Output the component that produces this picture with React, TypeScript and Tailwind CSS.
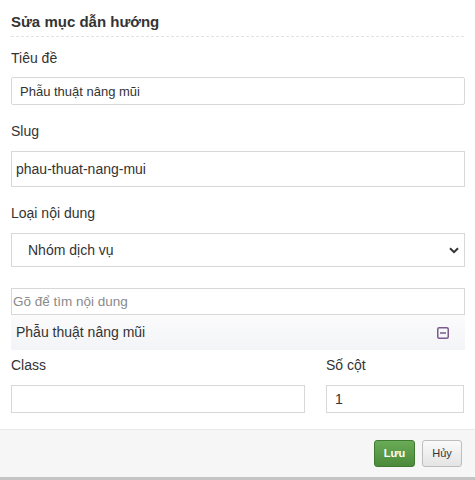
import { useState } from "react";

function Label({ children }: { children: React.ReactNode }) {
  return <label className="block h-5 text-[14px] leading-5 text-[#333]">{children}</label>;
}

export default function App() {
  const [title, setTitle] = useState("Phẫu thuật nâng mũi");
  const [slug, setSlug] = useState("phau-thuat-nang-mui");
  const [cols, setCols] = useState("1");

  return (
    <div
      className="flex h-[480px] w-[475px] flex-col bg-white text-[#333]"
      style={{ fontFamily: '"Liberation Sans", Arial, sans-serif' }}
    >
      <div className="px-[11px] pt-3">
        <h3 className="h-5 text-[15px] font-bold leading-5 text-[#333]">Sửa mục dẫn hướng</h3>
        <div className="mt-1 border-b border-dashed border-[#e3e3e3]" />
      </div>

      <div className="flex-1 px-[11px] pt-[11px]">
        <Label>Tiêu đề</Label>
        <input
          value={title}
          onChange={(e) => setTitle(e.target.value)}
          className="mt-[9px] block h-[28px] w-[454px] rounded-[2px] border border-[#d8d8d8] px-2 text-[13px] text-[#333] outline-none"
        />

        <div className="mt-4">
          <Label>Slug</Label>
        </div>
        <input
          value={slug}
          onChange={(e) => setSlug(e.target.value)}
          className="mt-[10px] block h-[36px] w-[454px] border border-[#d8d8d8] px-1 text-[14px] text-[#333] outline-none"
        />

        <div className="mt-4">
          <Label>Loại nội dung</Label>
        </div>
        <div className="relative mt-[10px] h-[34px] w-[454px]">
          <select className="block h-full w-full appearance-none border border-[#d8d8d8] bg-white pl-[16px] text-[14px] text-[#333] outline-none">
            <option>Nhóm dịch vụ</option>
          </select>
          <svg
            className="pointer-events-none absolute right-[6px] top-[14px]"
            width="10"
            height="7"
            viewBox="0 0 10 7"
            fill="none"
          >
            <path d="M1 1.2 5 5.2 9 1.2" stroke="#333" strokeWidth="2" />
          </svg>
        </div>

        <input
          placeholder="Gõ để tìm nội dung"
          className="mt-[21px] block h-[27px] w-[454px] border border-[#d8d8d8] px-[1px] text-[13.5px] text-[#333] outline-none placeholder:text-[#8a8a8a]"
        />
        <div className="flex h-[35px] w-[454px] items-center justify-between bg-gradient-to-b from-[#fbfbfc] to-[#f3f4f7] pl-[5px] pr-[16px]">
          <span className="text-[14px] text-[#333]">Phẫu thuật nâng mũi</span>
          <svg width="12" height="12" viewBox="0 0 12 12" fill="none">
            <rect x="0.75" y="0.75" width="10.5" height="10.5" rx="1.5" stroke="#7a5a8c" strokeWidth="1.5" />
            <path d="M3 6h6" stroke="#7a5a8c" strokeWidth="1.5" />
          </svg>
        </div>

        <div className="mt-[5px] flex gap-[21px]">
          <div className="w-[294px]">
            <Label>Class</Label>
            <input className="mt-[10px] block h-[28px] w-[294px] border border-[#d8d8d8] px-2 text-[14px] outline-none" />
          </div>
          <div className="w-[138px]">
            <Label>Số cột</Label>
            <input
              value={cols}
              onChange={(e) => setCols(e.target.value)}
              className="mt-[10px] block h-[28px] w-[138px] border border-[#d8d8d8] px-2 text-[14px] text-[#333] outline-none"
            />
          </div>
        </div>
      </div>

      <div className="flex h-[48px] items-start justify-end gap-[7px] border-t border-[#e8e8e8] bg-[#f6f6f6] pr-[13px] pt-[10px]">
        <button
          type="button"
          className="h-[27px] w-[41px] rounded-[3px] border border-[#3e7a30] bg-gradient-to-b from-[#6aab57] to-[#4a8a3a] text-[11px] font-bold text-white"
        >
          Lưu
        </button>
        <button
          type="button"
          className="h-[27px] w-[40px] rounded-[3px] border border-[#bdbdbd] bg-gradient-to-b from-[#fafafa] to-[#e4e4e4] text-[11px] text-[#333]"
        >
          Hủy
        </button>
      </div>
      <div className="h-[3px] bg-[#c4c4c4]" />
    </div>
  );
}
